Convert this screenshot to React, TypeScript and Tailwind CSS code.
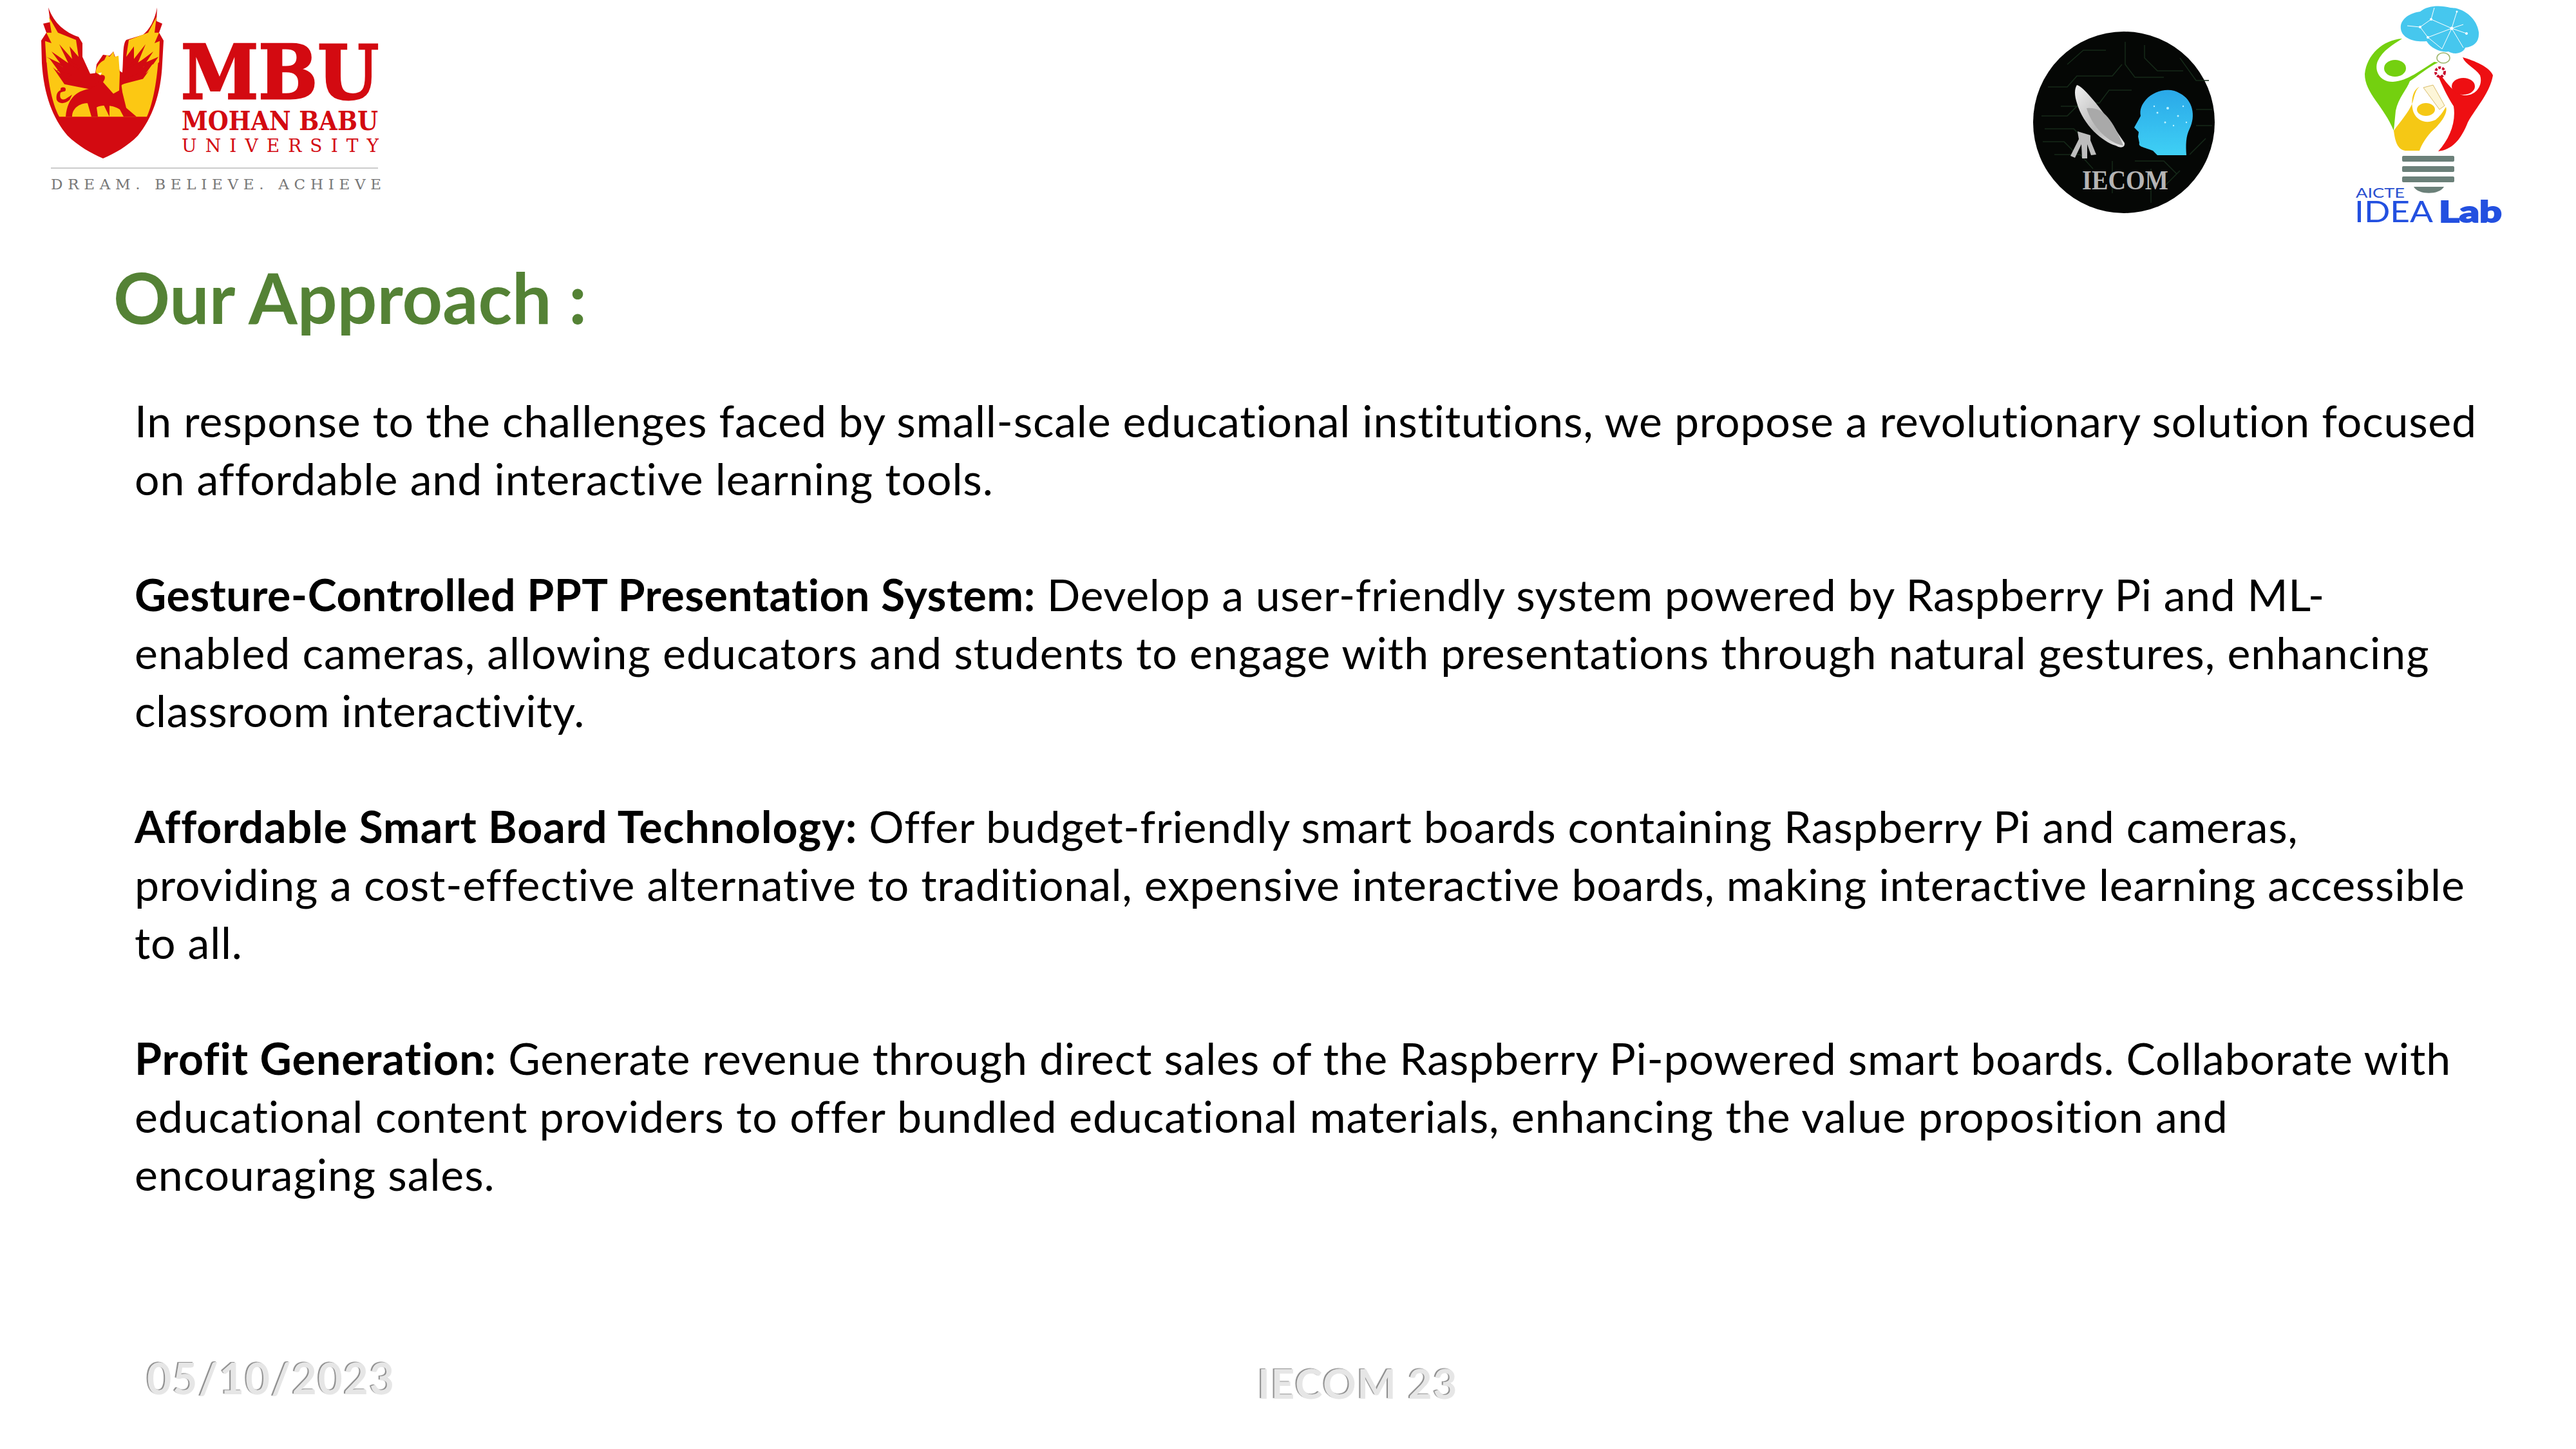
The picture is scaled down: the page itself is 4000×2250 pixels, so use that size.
import React from 'react';

const MbuLogo = () => (
  <svg width="640" height="310" viewBox="0 0 640 310" className="shrink-0">
    <g transform="scale(1 0.817)">
      <path
        d="M75 14 L78 42 L67 45 L72 62 L64 77 L65 120 C68 180 82 225 105 258 C122 278 142 292 160 301 C178 292 198 278 214 258 C236 225 250 180 252 120 L254 77 L247 62 L252 45 L243 40 L244 14 C240 40 232 56 222 66 L196 76 C190 84 192 110 190 138 L186 135 L178 105 L176 98 L170 106 L160 104 L150 122 L148 139 L140 140 L128 108 L128 82 L122 70 C102 62 84 45 75 14 Z"
        fill="#d30a11"
      />
      {/* yellow field */}
      <path d="M72 110 L100 160 L120 165 L150 172 L170 222 L92 222 C80 195 74 150 72 110 Z" fill="#fcc813" />
      <path d="M246 110 L222 150 L190 160 L170 190 L170 222 L228 222 C238 195 244 150 246 110 Z" fill="#fcc813" />
      {/* wing flames */}
      <path d="M76 32 L90 62 L118 76 L122 108 L108 88 L112 112 L92 84 L106 120 L80 98 L98 128 L76 110 L94 140 L72 118 L70 78 L80 82 L72 62 L80 62 Z" fill="#fcc813" />
      <path d="M243 32 L230 62 L200 76 L196 108 L208 88 L208 112 L226 84 L214 120 L238 98 L222 128 L244 110 L226 140 L247 118 L248 78 L240 82 L247 62 L240 62 Z" fill="#fcc813" />
      <path d="M72 108 L100 124 L92 112 L122 132 L110 116 L145 145 L150 165 L120 162 L128 155 L102 150 L112 142 L88 134 L98 128 Z" fill="#d30a11" />
      <path d="M246 108 L216 124 L224 112 L196 132 L208 116 L188 140 L188 162 L205 152 L198 148 L222 136 L214 130 L238 122 Z" fill="#d30a11" />
      {/* griffin body */}
      <path d="M150 140 C158 148 155 160 142 168 C122 172 105 182 102 222 L112 222 C112 205 124 196 136 196 L142 222 L152 222 L150 204 C160 198 176 200 186 208 L192 222 L212 222 L196 205 L190 175 L186 138 L170 170 L160 150 Z" fill="#d30a11" />
      <path d="M102 172 C92 168 86 176 88 190 C92 198 100 198 108 190 L112 180 L102 188 C94 192 92 184 94 176 Z" fill="#d30a11" />
      <circle cx="98" cy="170" r="4" fill="#d30a11" />
      {/* griffin head */}
      <path d="M149 138 C148 128 155 118 162 114 L166 104 L170 108 L176 98 L178 108 L184 106 L186 140 L185 172 L176 178 L160 156 C166 146 162 140 155 143 Z" fill="#fcc813" />
      <path d="M152 139 L158 138 L156 143 Z" fill="#ffffff" />
    </g>

    <text x="281" y="153" textLength="307" lengthAdjust="spacingAndGlyphs" fontFamily="'DejaVu Serif', serif" fontWeight="900" fontSize="116" fill="#d30a11" stroke="#d30a11" strokeWidth="3">MBU</text>
    <text x="282" y="202" textLength="305" lengthAdjust="spacingAndGlyphs" fontFamily="'DejaVu Serif', serif" fontWeight="700" fontSize="41" fill="#d30a11">MOHAN BABU</text>
    <text x="282" y="236" textLength="306" fontFamily="'DejaVu Serif', serif" fontSize="28" fill="#d30a11">UNIVERSITY</text>
    <line x1="79" y1="261" x2="587" y2="261" stroke="#cccccc" strokeWidth="2" />
    <text x="79" y="294" textLength="513" fontFamily="'DejaVu Serif', serif" fontSize="23" fill="#777777">DREAM. BELIEVE. ACHIEVE</text>
  </svg>
);

const IecomLogo = () => (
  <svg width="360" height="350" viewBox="0 0 360 350" className="shrink-0">
    <defs>
      <linearGradient id="dish" x1="0" y1="0" x2="1" y2="1">
        <stop offset="0" stopColor="#f2f2f2" />
        <stop offset="0.55" stopColor="#b9b9b9" />
        <stop offset="1" stopColor="#e8e8e8" />
      </linearGradient>
      <linearGradient id="head" x1="0" y1="0" x2="0" y2="1">
        <stop offset="0" stopColor="#2aa8e8" />
        <stop offset="1" stopColor="#3fd0f5" />
      </linearGradient>
    </defs>
    <circle cx="198" cy="190" r="141" fill="#050705" />
    {/* circuit traces */}
    <g fill="none" stroke="#162a19" strokeWidth="1.5">
      <path d="M70 180 H110 L130 160 H160 L175 140 H210 M75 200 H120 L135 215 M80 135 H110 L125 118 H180 L195 100" />
      <path d="M72 220 H105 L120 235 M90 240 H130 L150 262 M110 100 L135 78 H170 M200 65 V100 L215 120 H260 M230 70 V90 L250 110 H290" />
      <path d="M285 90 L310 125 H330 M310 170 H335 M310 195 H335 M300 240 L325 215 M215 250 H260 L280 270 M180 250 V300 M240 262 V315 M100 165 H135 M260 290 L285 265" />
    </g>
    {/* dish */}
    <path d="M125 132 C135 134 165 170 199 222 C200 230 192 230 185 226 C165 220 135 195 125 160 C121 148 121 138 125 132 Z" fill="url(#dish)" />
    <path d="M140 168 C165 165 180 185 197 226 C175 222 150 200 140 168 Z" fill="#a9a9a9" />
    <path d="M126 204 L146 210 L146 218 L155 240 L147 241 L141 224 L141 246 L133 246 L132 224 L122 245 L115 242 L128 216 Z" fill="#bdbdbd" />
    {/* head */}
    <path d="M232 155 C245 140 270 135 285 145 C305 155 310 180 300 200 C294 212 294 225 295 241 H250 L243 234 C228 228 220 228 222 222 L220 212 L221 205 L214 198 L224 180 C222 170 226 162 232 155 Z" fill="url(#head)" />
    <g fill="#bff2ff">
      <circle cx="266" cy="168" r="2" /><circle cx="250" cy="175" r="1.5" /><circle cx="282" cy="180" r="1.5" /><circle cx="262" cy="190" r="1.5" />
      <circle cx="245" cy="165" r="1.2" /><circle cx="290" cy="165" r="1.2" /><circle cx="275" cy="195" r="1.2" /><circle cx="295" cy="190" r="1.2" />
    </g>
    <text x="133" y="294" textLength="134" lengthAdjust="spacingAndGlyphs" fontFamily="'Liberation Serif', serif" fontWeight="700" fontSize="42" fill="#b4b4b4">IECOM</text>
  </svg>
);

const IdeaLabLogo = () => (
  <svg width="300" height="360" viewBox="0 0 300 360" className="shrink-0 ml-[160px]">
    {/* brain */}
    <path d="M108 45 C106 30 122 20 138 18 C150 8 170 8 185 12 C205 12 226 28 229 50 C230 65 222 72 208 74 C205 82 192 86 182 80 C172 82 155 76 148 64 C130 66 110 60 108 45 Z" fill="#46c7ee" />
    <g stroke="#ffffff" strokeWidth="1" fill="none">
      <path d="M138 42 L155 30 L187 44 L210 52 M155 30 L160 12 M187 44 L195 18 M187 44 L172 76 M138 42 L150 58 L187 44 M150 58 L172 76 M187 44 L205 74 M118 40 L138 42 M205 38 L187 44" />
    </g>
    <g fill="#ffffff">
      <circle cx="155" cy="30" r="2" /><circle cx="187" cy="44" r="2.5" /><circle cx="138" cy="42" r="2" /><circle cx="150" cy="58" r="2" /><circle cx="210" cy="52" r="2" /><circle cx="195" cy="18" r="1.5" />
    </g>
    {/* green figure */}
    <path d="M110 60 C80 62 55 85 52 115 C52 145 82 165 97 203 L100 172 C104 152 118 138 122 126 C132 120 150 104 166 97 L160 96 C140 108 118 126 96 127 C76 128 66 110 72 95 C80 78 95 70 110 60 Z" fill="#74d00f" />
    <ellipse cx="99" cy="106" rx="17" ry="13" fill="#74d00f" />
    <ellipse cx="174" cy="90" rx="10" ry="8" fill="none" stroke="#9db56a" strokeWidth="1.5" />
    {/* red figure */}
    <path d="M204 89 C222 94 246 104 251 117 C246 145 226 165 212 190 C204 210 192 232 166 235 C184 215 194 190 190 165 C180 150 172 132 166 118 L171 118 C180 130 192 146 206 148 C225 149 236 132 231 117 C224 106 208 100 204 89 Z" fill="#ee0f12" />
    <ellipse cx="205" cy="134" rx="18" ry="13" fill="#ee0f12" />
    <circle cx="169" cy="112" r="7" fill="none" stroke="#c8102e" strokeWidth="4" strokeDasharray="4 2" />
    {/* yellow figure */}
    <path d="M137 135 C125 140 123 160 128 175 C135 190 150 192 162 186 C168 181 172 176 178 166 C182 176 168 194 155 205 C146 215 140 225 137 234 L115 234 C102 232 99 218 97 203 C106 190 120 175 126 160 C129 150 130 140 137 135 Z" fill="#f5c815" />
    <ellipse cx="147" cy="170" rx="14" ry="10" fill="#f5c815" />
    <path d="M143 136 L158 132 L176 164 L168 170 Z" fill="#fdf6d8" stroke="#d9bd6a" strokeWidth="1" />
    {/* bulb base */}
    <rect x="110" y="242" width="81" height="9" rx="2" fill="#6b8079" />
    <rect x="110" y="258" width="81" height="9" rx="2" fill="#6b8079" />
    <rect x="110" y="274" width="81" height="9" rx="2" fill="#6b8079" />
    <path d="M128 290 H175 C168 303 135 303 128 290 Z" fill="#6b8079" />
    <text x="38" y="307" textLength="76" lengthAdjust="spacingAndGlyphs" fontFamily="Lato, sans-serif" fontSize="21" fill="#2a4fd0">AICTE</text>
    <text x="36" y="345" textLength="122" lengthAdjust="spacingAndGlyphs" fontFamily="Lato, sans-serif" fontSize="46" fill="#2350e0">IDEA</text>
    <text x="167" y="345" textLength="98" lengthAdjust="spacingAndGlyphs" fontFamily="Lato, sans-serif" fontWeight="900" fontSize="46" fill="#2350e0" stroke="#2350e0" strokeWidth="2">Lab</text>
  </svg>
);

const App: React.FC = () => {
  return (
    <div className="w-[4000px] h-[2250px] bg-white overflow-hidden flex flex-col font-['Lato',sans-serif] text-black [font-variant-ligatures:none]">
      <header className="flex items-start justify-between pr-[80px] h-[370px]">
        <MbuLogo />
        <div className="flex ml-auto">
          <IecomLogo />
          <IdeaLabLogo />
        </div>
      </header>

      <h1 className="pl-[176px] mt-[26px] text-[109px] leading-[130px] font-bold text-[#548235]">Our Approach :</h1>

      {/* tracking is set per line, Lato runs a bit off Calibri's widths */}
      <main className="pl-[209px] mt-[82px] text-[68px] leading-[90px] whitespace-nowrap flex flex-col gap-[90px]">
        <p>
          <span className="block tracking-[0.8px]">In response to the challenges faced by small-scale educational institutions, we propose a revolutionary solution focused</span>
          <span className="block tracking-[0.9px]">on affordable and interactive learning tools.</span>
        </p>
        <p>
          <span className="block tracking-[0.63px]"><b className="tracking-[0.48px]">Gesture-Controlled PPT Presentation System:</b> Develop a user-friendly system powered by Raspberry Pi and ML-</span>
          <span className="block tracking-[0.93px]">enabled cameras, allowing educators and students to engage with presentations through natural gestures, enhancing</span>
          <span className="block tracking-[0.6px]">classroom interactivity.</span>
        </p>
        <p>
          <span className="block tracking-[0.73px]"><b className="tracking-[0.9px]">Affordable Smart Board Technology:</b> Offer budget-friendly smart boards containing Raspberry Pi and cameras,</span>
          <span className="block tracking-[0.76px]">providing a cost-effective alternative to traditional, expensive interactive boards, making interactive learning accessible</span>
          <span className="block tracking-[0.8px]">to all.</span>
        </p>
        <p>
          <span className="block tracking-[0.8px]"><b className="tracking-[1px]">Profit Generation:</b> Generate revenue through direct sales of the Raspberry Pi-powered smart boards. Collaborate with</span>
          <span className="block tracking-[0.96px]">educational content providers to offer bundled educational materials, enhancing the value proposition and</span>
          <span className="block tracking-[0.9px]">encouraging sales.</span>
        </p>
      </main>

      <footer className="mt-auto mb-[62px] pl-[228px] flex items-end font-bold text-[#e6e6e6] [text-shadow:-2px_-1px_1px_#8a8a8a]">
        <span className="w-[1725px] pb-[8px] text-[66px] leading-[80px] tracking-[1.8px]">05/10/2023</span>
        <span className="text-[64px] leading-[80px] tracking-[1.6px]">IECOM 23</span>
      </footer>
    </div>
  );
};

export default App;
